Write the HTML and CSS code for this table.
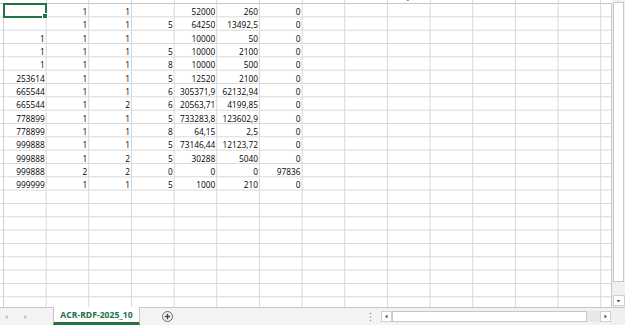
FILE: index.html
```html
<!DOCTYPE html>
<html>
<head>
<meta charset="utf-8">
<link rel="stylesheet" href="styles.css">
</head>
<body>
<div class="app">
  <div class="main">
    <div class="sheet">
      <div class="colhead">
        <div class="rh-corner"></div>
        <div class="letters">
          <span class="active">A</span><span>B</span><span>C</span><span>D</span><span>E</span><span>F</span><span>G</span><span>H</span><span>I</span><span>J</span><span>K</span><span>L</span><span>M</span><span>N</span><span>O</span>
        </div>
      </div>
      <div class="body">
        <div class="rowhead"></div>
        <div class="cells">
          <div class="data">
            <div></div><div>1</div><div>1</div><div></div><div>52000</div><div>260</div><div>0</div>
            <div></div><div>1</div><div>1</div><div>5</div><div>64250</div><div>13492,5</div><div>0</div>
            <div>1</div><div>1</div><div>1</div><div></div><div>10000</div><div>50</div><div>0</div>
            <div>1</div><div>1</div><div>1</div><div>5</div><div>10000</div><div>2100</div><div>0</div>
            <div>1</div><div>1</div><div>1</div><div>8</div><div>10000</div><div>500</div><div>0</div>
            <div>253614</div><div>1</div><div>1</div><div>5</div><div>12520</div><div>2100</div><div>0</div>
            <div>665544</div><div>1</div><div>1</div><div>6</div><div>305371,9</div><div>62132,94</div><div>0</div>
            <div>665544</div><div>1</div><div>2</div><div>6</div><div>20563,71</div><div>4199,85</div><div>0</div>
            <div>778899</div><div>1</div><div>1</div><div>5</div><div>733283,8</div><div>123602,9</div><div>0</div>
            <div>778899</div><div>1</div><div>1</div><div>8</div><div>64,15</div><div>2,5</div><div>0</div>
            <div>999888</div><div>1</div><div>1</div><div>5</div><div>73146,44</div><div>12123,72</div><div>0</div>
            <div>999888</div><div>1</div><div>2</div><div>5</div><div>30288</div><div>5040</div><div>0</div>
            <div>999888</div><div>2</div><div>2</div><div>0</div><div>0</div><div>0</div><div>97836</div>
            <div>999999</div><div>1</div><div>1</div><div>5</div><div>1000</div><div>210</div><div>0</div>
          </div>
          <div class="sel"><span class="handle"></span></div>
        </div>
      </div>
    </div>
    <div class="vscroll">
      <div class="vthumb"></div>
      <div class="vtrack"></div>
      <div class="varrow">
        <svg width="9" height="8" viewBox="0 0 9 8"><path d="M2.5 3 L6.5 3 L4.5 5.5 Z" fill="#555"/></svg>
      </div>
    </div>
  </div>
  <div class="bottombar">
    <div class="nav">
      <svg width="53" height="18" viewBox="0 0 53 18"><path d="M7.5 7 L7.5 11 L5 9 Z" fill="#b5b5b5"/><path d="M24.5 7 L24.5 11 L27 9 Z" fill="#b5b5b5"/></svg>
    </div>
    <div class="tab">ACR-RDF-2025_10</div>
    <div class="add">
      <svg width="13" height="13" viewBox="0 0 13 13"><circle cx="6.5" cy="6.5" r="5" fill="none" stroke="#6b6b6b" stroke-width="1"/><path d="M6.5 3.8 V9.2 M3.8 6.5 H9.2" stroke="#444" stroke-width="1.3"/></svg>
    </div>
    <div class="spacer"></div>
    <div class="dots">
      <svg width="3" height="10" viewBox="0 0 3 10"><circle cx="1.5" cy="1.5" r="0.8" fill="#999"/><circle cx="1.5" cy="5" r="0.8" fill="#999"/><circle cx="1.5" cy="8.5" r="0.8" fill="#999"/></svg>
    </div>
    <div class="hscroll">
      <div class="harrow">
        <svg width="9" height="9" viewBox="0 0 9 9"><path d="M5.5 2.5 L5.5 6.5 L3 4.5 Z" fill="#555"/></svg>
      </div>
      <div class="hthumb"></div>
      <div class="htrack"></div>
      <div class="harrow">
        <svg width="9" height="9" viewBox="0 0 9 9"><path d="M3.5 2.5 L3.5 6.5 L6 4.5 Z" fill="#555"/></svg>
      </div>
    </div>
    <div class="corner"></div>
  </div>
</div>
</body>
</html>
```

FILE: styles.css
```css
html, body {
  margin: 0;
  padding: 0;
  background: #ffffff;
}

body {
  width: 625px;
  height: 325px;
  overflow: hidden;
  font-family: "Open Sans", "Liberation Sans", sans-serif;
}

.app {
  display: flex;
  flex-direction: column;
  width: 625px;
  height: 325px;
}

.main {
  display: flex;
  height: 307px;
  flex: none;
}

.sheet {
  width: 612px;
  display: flex;
  flex-direction: column;
}

.colhead {
  height: 3px;
  border-bottom: 1px solid #c8c8c8;
  display: flex;
  overflow: hidden;
  background: #ffffff;
}

.rh-corner {
  width: 4px;
  flex: none;
}

.letters {
  display: flex;
  margin-top: -9px;
  height: 12px;
}

.letters span {
  width: 42.67px;
  flex: none;
  text-align: center;
  font-size: 9px;
  line-height: 12px;
  color: #444;
  border-right: 1px solid #d6d6d6;
  box-sizing: border-box;
}

.letters span.active {
  color: #217346;
}

.body {
  display: flex;
  flex: 1;
}

.rowhead {
  width: 3px;
  border-right: 1px solid #cfcfcf;
  background: #ffffff;
  background-image: linear-gradient(to bottom, transparent calc(100% - 1px), #dedede calc(100% - 1px));
  background-size: 100% 13.33px;
  flex: none;
}

.cells {
  position: relative;
  width: 607px;
  border-right: 1px solid #c8c8c8;
  background-color: #ffffff;
  background-image:
    linear-gradient(to right, transparent calc(100% - 1px), #d8d8d8 calc(100% - 1px)),
    linear-gradient(to bottom, transparent calc(100% - 1px), #d8d8d8 calc(100% - 1px));
  background-size: 42.67px 100%, 100% 13.33px;
  flex: none;
}

.data {
  display: grid;
  grid-template-columns: repeat(7, 42.67px);
  grid-auto-rows: 13.33px;
}

.data div {
  text-align: right;
  padding-right: 2px;
  font-size: 8.3px;
  line-height: 15.5px;
  color: #000;
  white-space: nowrap;
  overflow: visible;
}

.sel {
  position: absolute;
  left: -1px;
  top: -1px;
  width: 44px;
  height: 15px;
  border: 2px solid #217346;
  box-sizing: border-box;
}

.handle {
  position: absolute;
  right: -3px;
  bottom: -3px;
  width: 4px;
  height: 4px;
  background: #217346;
  border: 1px solid #ffffff;
  box-sizing: content-box;
}

.vscroll {
  width: 13px;
  background: #f0f0f0;
  display: flex;
  flex-direction: column;
  align-items: center;
  padding-top: 2px;
  box-sizing: border-box;
}

.vthumb {
  width: 9px;
  height: 278px;
  background: #ffffff;
  border: 1px solid #c6c6c6;
  flex: none;
}

.vtrack {
  flex: 1;
}

.varrow {
  width: 10px;
  height: 9px;
  display: flex;
  align-items: center;
  justify-content: center;
  background: #ffffff;
  border: 1px solid #cfcfcf;
  margin-bottom: 1px;
}

.bottombar {
  height: 18px;
  display: flex;
  align-items: stretch;
  background: #f3f3f3;
  border-top: 1px solid #c6c6c6;
  box-sizing: border-box;
  flex: none;
}

.nav {
  width: 53px;
  flex: none;
}

.nav svg {
  display: block;
}

.tab {
  width: 87px;
  flex: none;
  background: #ffffff;
  border-left: 1px solid #c6c6c6;
  border-right: 1px solid #c6c6c6;
  border-bottom: 3px solid #217346;
  margin-top: -1px;
  box-sizing: border-box;
  color: #217346;
  font-weight: bold;
  font-size: 8.6px;
  text-align: center;
  line-height: 16px;
}

.add {
  margin-left: 21px;
  display: flex;
  align-items: center;
}

.add svg {
  display: block;
}

.spacer {
  flex: 1;
}

.dots {
  display: flex;
  align-items: center;
  margin-right: 9px;
}

.hscroll {
  width: 230px;
  display: flex;
  align-items: center;
  flex: none;
}

.harrow {
  width: 9px;
  height: 9px;
  border: 1px solid #cfcfcf;
  background: #ffffff;
  display: flex;
  align-items: center;
  justify-content: center;
  flex: none;
}

.harrow svg {
  display: block;
}

.hthumb {
  width: 193px;
  height: 9px;
  background: #ffffff;
  border: 1px solid #c6c6c6;
  flex: none;
}

.htrack {
  flex: 1;
  height: 11px;
  background: #e8e8e8;
}

.corner {
  width: 14px;
  flex: none;
  background: #f0f0f0;
}
```
